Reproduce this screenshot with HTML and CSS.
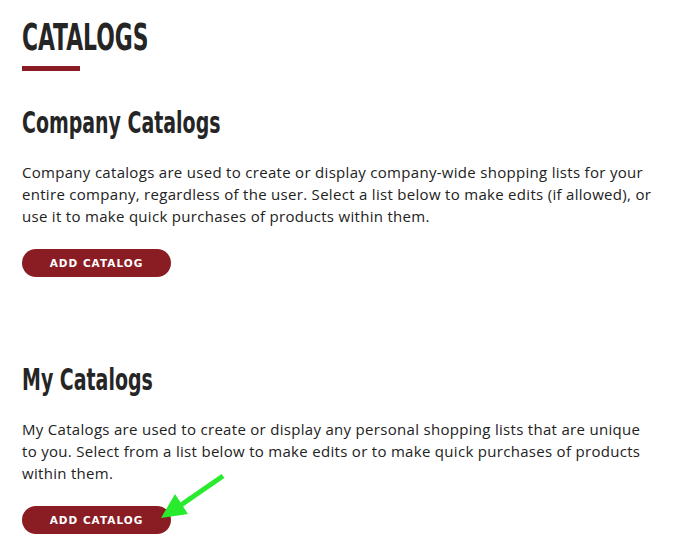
FILE: index.html
```html
<!DOCTYPE html>
<html lang="en">
<head>
    <meta charset="UTF-8">
    <meta name="viewport" content="width=device-width, initial-scale=1.0">
    <title>Catalogs</title>
    <link rel="stylesheet" href="styles.css">
</head>
<body>
    <div class="page">
        <h1 class="page-title">CATALOGS</h1>
        <div class="title-bar"></div>

        <section class="catalog-section">
            <h2 class="section-title">Company Catalogs</h2>
            <p class="section-text">Company catalogs are used to create or display company-wide shopping lists for your entire company, regardless of the user. Select a list below to make edits (if allowed), or use it to make quick purchases of products within them.</p>
            <button class="btn">ADD CATALOG</button>
        </section>

        <section class="catalog-section mine">
            <h2 class="section-title">My Catalogs</h2>
            <p class="section-text">My Catalogs are used to create or display any personal shopping lists that are unique to you. Select from a list below to make edits or to make quick purchases of products within them.</p>
            <button class="btn">ADD CATALOG</button>
            <!-- annotation arrow pointing at the button -->
            <svg class="arrow" width="80" height="66" viewBox="0 0 80 66">
                <line x1="73" y1="15" x2="28" y2="46" stroke="#27eb2c" stroke-width="5"/>
                <polygon points="11,57 25,33 38,53" fill="#27eb2c"/>
            </svg>
        </section>
    </div>
</body>
</html>
```

FILE: styles.css
```css
body {
    margin: 0;
    background: #fff;
    color: #222;
    font-family: "Open Sans", Arial, sans-serif;
}
.page {
    position: relative;
    padding: 14px 22px 0;
}
.page-title,
.section-title {
    margin: 0;
    font-family: "DejaVu Sans Condensed", "DejaVu Sans", Arial, sans-serif;
    font-weight: bold;
    color: #252525;
    transform: scaleX(0.64);
    transform-origin: left center;
    white-space: nowrap;
}
.page-title {
    font-size: 38px;
    line-height: 46px;
}
.title-bar {
    width: 58px;
    height: 5px;
    margin-top: 6px;
    background: #8a1c24;
}
.catalog-section {
    position: relative;
}
.section-title {
    font-size: 31px;
    line-height: 38px;
    margin-top: 32px;
    transform: scaleX(0.68);
}
.mine .section-title {
    margin-top: 83px;
}
.section-text {
    margin: 20px 0 0;
    max-width: 633px;
    font-size: 15px;
    line-height: 22px;
    letter-spacing: 0.3px;
}
.btn {
    display: block;
    margin-top: 22px;
    width: 149px;
    height: 28px;
    border: none;
    border-radius: 14px;
    background: #8a1c24;
    color: #fff;
    font-family: "DejaVu Sans", Arial, sans-serif;
    font-weight: bold;
    font-size: 10.5px;
    letter-spacing: 1px;
    cursor: pointer;
}
.arrow {
    position: absolute;
    left: 128px;
    bottom: 7px;
}
```
